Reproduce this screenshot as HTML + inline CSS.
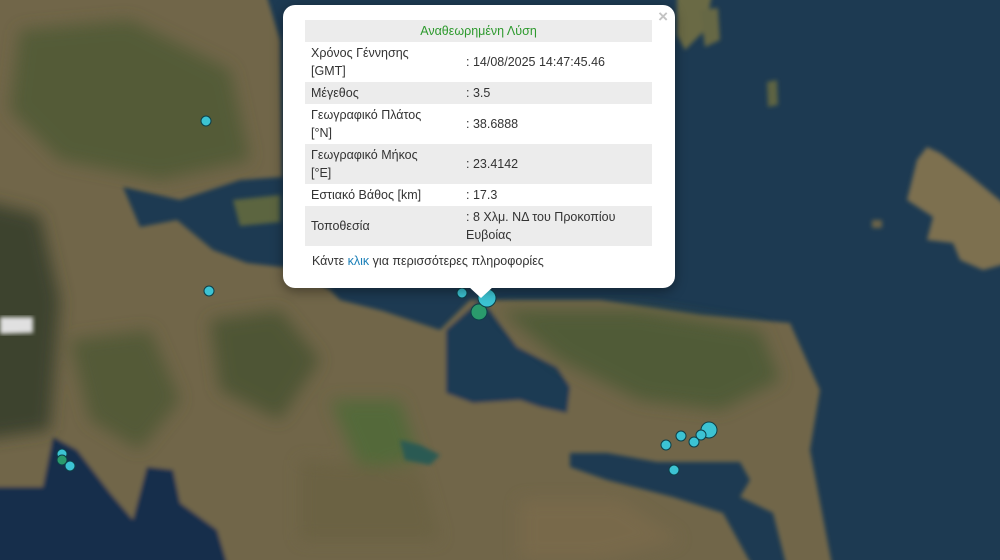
<!DOCTYPE html>
<html><head><meta charset="utf-8"><style>
body{margin:0;width:1000px;height:560px;overflow:hidden;background:#1d3a52;font-family:"Liberation Sans",sans-serif}
#map{position:absolute;left:0;top:0}
.pop{position:absolute;left:283px;top:5px;width:392px;height:283px;background:#fff;border-radius:12px;box-shadow:0 3px 12px rgba(0,0,0,.4)}
.tip{position:absolute;left:468px;top:286px;width:0;height:0;border-left:13px solid transparent;border-right:13px solid transparent;border-top:12px solid #fff}
.x{position:absolute;right:7px;top:2px;color:#c3c3c3;font-size:17px;font-weight:bold}
table{position:absolute;left:22px;top:15px;width:347px;border-collapse:collapse;font-size:12.5px;color:#333}
td{padding:2px 6px;line-height:18px;vertical-align:middle}
tr.g td{background:#ececec}
td.v{padding-left:4px}
.h{text-align:center;color:#2e9a2e}
.f{position:absolute;left:29px;top:249px;font-size:12.5px;color:#333}
.f span{color:#1a7fb8}
</style></head><body>
<svg id="map" width="1000" height="560" viewBox="0 0 1000 560">
<defs>
<filter id="b" x="-10%" y="-10%" width="120%" height="120%"><feGaussianBlur stdDeviation="2"/></filter>
<filter id="s"><feGaussianBlur stdDeviation="8"/></filter>
</defs>
<rect width="1000" height="560" fill="#1d3a52"/>
<g filter="url(#b)">
<path d="M-20 -20H262L280 40L282 177L240 180L180 200L123 187L140 227L177 220L213 250L247 263L290 268L330 290L340 300L383 311L440 330L470 300L490 300L600 300L700 315L790 323L820 390L810 450L835 580L790 580L773 513L740 497L750 480L740 462L657 462L607 453L570 453L570 467L607 480L673 497L723 513L760 580H230L217 530L180 503L173 470L147 467L133 520L110 493L77 450L53 437L43 487L-20 487Z" fill="#716649"/>
<path d="M-20 487L43 487L53 437L77 450L110 493L133 520L147 467L173 470L180 503L217 530L232 580L-20 580Z" fill="#172f4b"/>
<path d="M446 330L480 300L490 310L517 347L557 367L570 387L567 413L540 407L520 400L473 403L446 393Z" fill="#1d3a52"/>
<path d="M233 200L280 195L280 222L240 226Z" fill="#5c6540"/>
<path d="M677 -10H713L705 30L685 50L677 35Z" fill="#6a6a45"/>
<path d="M700 10L718 8L720 40L705 47Z" fill="#666844"/>
<path d="M767 82L777 80L778 105L768 107Z" fill="#5d6442"/>
<path d="M927 147L917 160L907 200L933 217L927 240L953 243L960 260L983 270L1020 260V217L967 173L940 153Z" fill="#7d6f50"/>
<path d="M872 220L882 220L882 228L872 228Z" fill="#6a6448"/>
</g>
<g filter="url(#s)" opacity="0.85">
<path d="M-20 200L40 215L60 300L50 430L-20 440Z" fill="#363d29"/>
<path d="M20 30L130 20L230 70L250 160L160 180L60 160L10 110Z" fill="#505a36"/>
<path d="M70 340L150 330L180 400L140 450L90 420Z" fill="#4f5836"/>
<path d="M210 320L280 310L320 360L280 420L220 390Z" fill="#4a5233"/>
<path d="M500 310L640 310L760 330L780 380L720 410L640 400L560 360Z" fill="#4c5a36"/>
<path d="M330 400L400 400L420 460L360 470Z" fill="#4f6a38"/>
<path d="M520 500L620 500L680 540L600 560L520 560Z" fill="#7a6a4c"/>
<path d="M300 460L420 470L440 540L300 540Z" fill="#6b6242"/>
</g>
<path d="M400 440L420 445L440 455L430 465L405 460Z" fill="#2b5a52" filter="url(#b)"/>
<path d="M0 317L33 317L33 333L0 334Z" fill="#e0e0e0" filter="url(#b)"/>
<g stroke="#0d3f48" stroke-width="1" fill="#3cc3d3">
<circle cx="206" cy="121" r="5"/><circle cx="209" cy="291" r="5"/>
<circle cx="462" cy="293" r="5"/><circle cx="479" cy="312" r="8" fill="#2a9a6c"/><circle cx="487" cy="298" r="9"/>
<circle cx="709" cy="430" r="8"/><circle cx="701" cy="435" r="5"/><circle cx="694" cy="442" r="5"/><circle cx="681" cy="436" r="5"/><circle cx="666" cy="445" r="5"/><circle cx="674" cy="470" r="5"/>
<circle cx="62" cy="454" r="5"/><circle cx="62" cy="460" r="5" fill="#2a9a6c"/><circle cx="70" cy="466" r="5"/>
</g>
</svg>
<div class="pop"><div class="x">×</div>
<table>
<tr class="g"><td colspan="2" class="h">Αναθεωρημένη Λύση</td></tr>
<tr><td style="width:145px">Χρόνος Γέννησης<br>[GMT]</td><td class="v">: 14/08/2025 14:47:45.46</td></tr>
<tr class="g"><td>Μέγεθος</td><td class="v">: 3.5</td></tr>
<tr><td>Γεωγραφικό Πλάτος<br>[°N]</td><td class="v">: 38.6888</td></tr>
<tr class="g"><td>Γεωγραφικό Μήκος<br>[°E]</td><td class="v">: 23.4142</td></tr>
<tr><td>Εστιακό Βάθος [km]</td><td class="v">: 17.3</td></tr>
<tr class="g"><td>Τοποθεσία</td><td class="v">: 8 Χλμ. ΝΔ του Προκοπίου<br>Ευβοίας</td></tr>
</table>
<div class="f">Κάντε <span>κλικ</span> για περισσότερες πληροφορίες</div>
</div>
<div class="tip"></div>
</body></html>
